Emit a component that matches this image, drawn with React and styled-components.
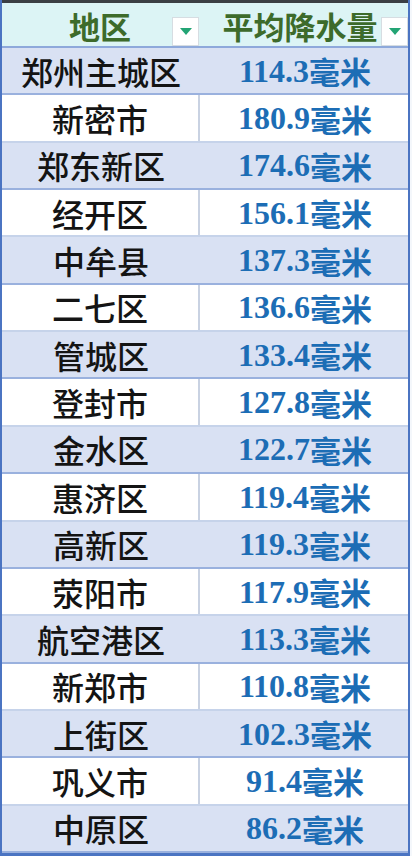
import React from 'react'
import styled, { createGlobalStyle } from 'styled-components'

const GlobalStyle = createGlobalStyle`
  html, body {
    margin: 0;
    padding: 0;
    background: #f4f7fb;
  }
  body {
    font-family: "Noto Sans CJK SC", "Noto Sans", sans-serif;
  }
`

const rows = [
  ['郑州主城区', '114.3'],
  ['新密市', '180.9'],
  ['郑东新区', '174.6'],
  ['经开区', '156.1'],
  ['中牟县', '137.3'],
  ['二七区', '136.6'],
  ['管城区', '133.4'],
  ['登封市', '127.8'],
  ['金水区', '122.7'],
  ['惠济区', '119.4'],
  ['高新区', '119.3'],
  ['荥阳市', '117.9'],
  ['航空港区', '113.3'],
  ['新郑市', '110.8'],
  ['上街区', '102.3'],
  ['巩义市', '91.4'],
  ['中原区', '86.2'],
]

const Page = styled.div`
  width: 410px;
  height: 856px;
  display: grid;
  grid-template-rows: 3px 45px repeat(17, 1fr);
  box-sizing: border-box;
  border-left: 2px solid #4b74c2;
  border-right: 2px solid #4b74c2;
  border-bottom: 3px solid #4b74c2;
  background: #fff;
`

const TopBar = styled.div`
  background: #3b3f44;
`

const Header = styled.div`
  display: grid;
  grid-template-columns: 198px 1fr;
  background: #dcf4f5;
  border-bottom: 2px solid #8ea9db;
`

const HeadCell = styled.div`
  position: relative;
  display: flex;
  align-items: center;
  justify-content: center;
  padding-right: ${p => p.$pad || 0}px;
  color: #3d6b2b;
  font-size: 31px;
  font-weight: 700;
`

const Drop = styled.div`
  position: absolute;
  right: ${p => p.$right}px;
  top: 14px;
  width: 27px;
  height: 29px;
  box-sizing: border-box;
  background: #fff;
  border: 1px solid #d6dde2;
  display: flex;
  align-items: center;
  justify-content: center;
`

const Row = styled.div`
  display: grid;
  grid-template-columns: 198px 1fr;
  background: ${p => (p.$shaded ? '#d9e1f3' : '#ffffff')};
  border-bottom: 2px solid ${p => (p.$shaded ? '#9ab1de' : '#c6d3ea')};
  min-height: 0;
`

const Cell = styled.div`
  display: flex;
  align-items: center;
  justify-content: center;
  font-size: 32px;
  font-weight: 500;
  line-height: 1;
  color: #141414;
  border-right: ${p => (p.$divider ? '2px solid #c9d2e2' : '0')};
`

const Value = styled(Cell)`
  color: #1c6db5;
  font-size: 31px;
  font-weight: 700;
  padding-left: 2px;
`

const Num = styled.span`
  font-family: "Liberation Serif", serif;
  font-size: 32px;
  font-weight: 700;
`

const Arrow = () => (
  <svg width="12" height="8" viewBox="0 0 12 8">
    <polygon points="0,0 12,0 6,7" fill="#23a474" />
  </svg>
)

export default function App() {
  return (
    <>
      <GlobalStyle />
      <Page>
        <TopBar />
        <Header>
          <HeadCell $pad={2}>
            地区
            <Drop $right={1}><Arrow /></Drop>
          </HeadCell>
          <HeadCell $pad={8}>
            平均降水量
            <Drop $right={0}><Arrow /></Drop>
          </HeadCell>
        </Header>
        {rows.map(([name, val], i) => (
          <Row key={name} $shaded={i % 2 === 0}>
            <Cell $divider={i % 2 === 1}>{name}</Cell>
            <Value>
              <Num>{val}</Num>毫米
            </Value>
          </Row>
        ))}
      </Page>
    </>
  )
}
